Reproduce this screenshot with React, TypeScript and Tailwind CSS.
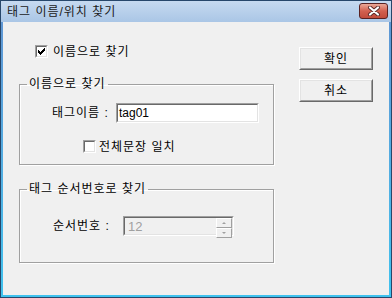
import React from 'react';

const font = { fontFamily: '"Liberation Sans", "Noto Sans CJK KR", sans-serif' };

function Check({ checked = false }: { checked?: boolean }) {
  return (
    <div className="w-[13px] h-[13px] border border-t-[#a0a0a0] border-l-[#a0a0a0] border-b-white border-r-white shrink-0">
      <div className="w-full h-full border border-t-[#696969] border-l-[#696969] border-b-[#e3e3e3] border-r-[#e3e3e3] bg-white">
        {checked && (
          <svg width="9" height="9" viewBox="0 0 9 9" className="block" shapeRendering="crispEdges">
            <path
              fill="#000"
              d="M7 1h1v1H7zM6 2h2v1H6zM1 3h1v1H1zM5 3h3v1H5zM1 4h2v1H1zM4 4h3v1H4zM1 5h5v1H1zM2 6h3v1H2zM3 7h1v1H3z"
            />
          </svg>
        )}
      </div>
    </div>
  );
}

function Sunken({ children, className = '' }: { children: React.ReactNode; className?: string }) {
  return (
    <div className={`border border-t-[#a0a0a0] border-l-[#a0a0a0] border-b-white border-r-white ${className}`}>
      <div className="w-full h-full border border-t-[#696969] border-l-[#696969] border-b-[#e3e3e3] border-r-[#e3e3e3] flex">
        {children}
      </div>
    </div>
  );
}

function Button({ label }: { label: string }) {
  return (
    <div className="w-[74px] h-[23px] border border-t-white border-l-white border-b-[#696969] border-r-[#696969]">
      <div className="w-full h-full border border-t-[#e3e3e3] border-l-[#e3e3e3] border-b-[#a0a0a0] border-r-[#a0a0a0] bg-[#f0f0f0] flex items-center justify-center text-[12px] tracking-[1px] text-black">
        {label}
      </div>
    </div>
  );
}

function Group({ title, children, className = '' }: { title: string; children: React.ReactNode; className?: string }) {
  return (
    <fieldset className={`w-[255px] border border-[#a0a0a0] shadow-[1px_1px_0_#fff,inset_1px_1px_0_#fff] p-0 m-0 ${className}`}>
      <legend className="ml-[7px] px-[2px] text-[12px] leading-[14px] tracking-[1px] text-black">{title}</legend>
      {children}
    </fieldset>
  );
}

export default function App() {
  return (
    <div style={font} className="w-[392px] h-[298px] bg-[#27476b] p-px flex flex-col overflow-hidden">
      {/* Title bar */}
      <div className="h-[21px] shrink-0 bg-gradient-to-b from-[#c6daf0] to-[#aac6e6] flex items-center justify-between pl-[6px] pr-[3px]">
        <span className="text-[12px] tracking-[1px] text-[#1a1a1a] leading-none pt-px">태그 이름/위치 찾기</span>
        <div className="w-[29px] h-[16px] mt-[-1px] rounded-[3px] border border-[#5a2222] bg-gradient-to-b from-[#eaa898] via-[#d2604f] to-[#c24c3c] flex items-center justify-center">
          <svg width="14" height="10" viewBox="0 0 14 10">
            <path d="M3 1.5 L11 8.5 M11 1.5 L3 8.5" stroke="#5a2a2a" strokeWidth="4" strokeLinecap="round" />
            <path d="M3 1.5 L11 8.5 M11 1.5 L3 8.5" stroke="#fff" strokeWidth="2.2" strokeLinecap="round" />
          </svg>
        </div>
      </div>

      {/* Frame */}
      <div className="flex-1 bg-gradient-to-b from-[#5f97d4] to-[#3fc2ee] px-[2px] pb-[2px] flex">
        <div className="flex-1 bg-[#f0f0f0] flex text-[12px] text-black">
          {/* Left column */}
          <div className="pl-[16px] flex flex-col">
            <div className="flex items-center mt-[23px] ml-[16px] h-[13px]">
              <Check checked />
              <span className="ml-[5px] leading-none tracking-[1px]">이름으로 찾기</span>
            </div>

            <Group title="이름으로 찾기" className="mt-[19px]">
              <div className="flex items-center mt-[12px] pl-[32px]">
                <span className="w-[64px] leading-none tracking-[1px]">태그이름 :</span>
                <Sunken className="w-[143px] h-[20px] bg-white">
                  <span className="pl-[1px] self-center leading-none">tag01</span>
                </Sunken>
              </div>
              <div className="flex items-center mt-[17px] mb-[11px] pl-[63px] h-[13px]">
                <Check />
                <span className="ml-[3px] leading-none tracking-[1px]">전체문장 일치</span>
              </div>
            </Group>

            <Group title="태그 순서번호로 찾기" className="mt-[17px]">
              <div className="flex items-center mt-[20px] mb-[26px] pl-[33px]">
                <span className="w-[70px] leading-none tracking-[1px]">순서번호 :</span>
                <Sunken className="w-[111px] h-[20px] bg-[#f0f0f0]">
                  <span className="flex-1 pl-[3px] self-center leading-none text-[13px] text-[#a0a0a0]">12</span>
                  <div className="w-[16px] flex flex-col">
                    {['M4 6 L6 4 L8 6 Z', 'M4 4 L6 6 L8 4 Z'].map((d) => (
                      <div
                        key={d}
                        className="flex-1 border border-t-white border-l-white border-b-[#a0a0a0] border-r-[#a0a0a0] bg-[#f0f0f0] flex items-center justify-center"
                      >
                        <svg width="12" height="8" viewBox="0 2 12 6">
                          <path d={d} fill="#a0a0a0" />
                        </svg>
                      </div>
                    ))}
                  </div>
                </Sunken>
              </div>
            </Group>
          </div>

          {/* Right column */}
          <div className="ml-[25px] mt-[25px] flex flex-col gap-[9px]">
            <Button label="확인" />
            <Button label="취소" />
          </div>
        </div>
      </div>
    </div>
  );
}
